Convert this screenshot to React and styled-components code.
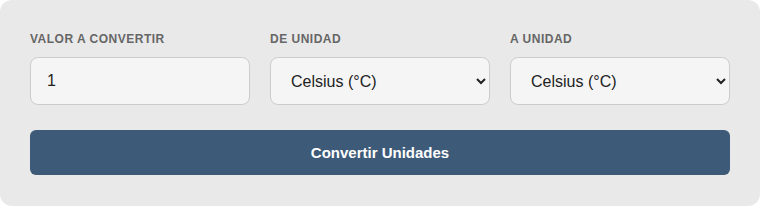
import styled, { createGlobalStyle } from "styled-components";
import { useState } from "react";

const Global = createGlobalStyle`
  html, body {
    margin: 0;
    padding: 0;
    background: #ffffff;
  }
  * {
    box-sizing: border-box;
  }
`;

const Card = styled.div`
  width: 760px;
  height: 206px;
  background: #e9e9e9;
  border-radius: 12px;
  padding: 30px;
  font-family: "Liberation Sans", Arial, sans-serif;
`;

const Fields = styled.div`
  display: grid;
  grid-template-columns: repeat(3, 220px);
  gap: 20px;
`;

const Field = styled.div`
  display: flex;
  flex-direction: column;
`;

const Label = styled.label`
  font-size: 12px;
  font-weight: 700;
  letter-spacing: 0.5px;
  text-transform: uppercase;
  color: #666666;
  line-height: 18px;
  margin-bottom: 9px;
`;

const controlCss = `
  height: 48px;
  width: 100%;
  border: 1px solid #cccccc;
  border-radius: 8px;
  background: #f5f5f5;
  font-family: "Liberation Sans", Arial, sans-serif;
  font-size: 16px;
  color: #222222;
  outline: none;
`;

const Input = styled.input`
  ${controlCss}
  padding: 0 16px;
`;

const Select = styled.select`
  ${controlCss}
  padding: 0 8px 0 16px;
`;

const Button = styled.button`
  display: block;
  width: 100%;
  height: 45px;
  margin-top: 25px;
  border: none;
  border-radius: 6px;
  background: #3d5a78;
  color: #ffffff;
  font-family: "Liberation Sans", Arial, sans-serif;
  font-size: 15px;
  font-weight: 700;
  cursor: pointer;
`;

const UNITS = ["Celsius (°C)", "Fahrenheit (°F)", "Kelvin (K)"];

const App = () => {
  const [value, setValue] = useState("1");
  const [from, setFrom] = useState(UNITS[0]);
  const [to, setTo] = useState(UNITS[0]);
  return (
    <>
      <Global />
      <Card>
        <Fields>
          <Field>
            <Label>Valor a convertir</Label>
            <Input value={value} onChange={(e) => setValue(e.target.value)} />
          </Field>
          <Field>
            <Label>De unidad</Label>
            <Select value={from} onChange={(e) => setFrom(e.target.value)}>
              {UNITS.map((u) => (
                <option key={u}>{u}</option>
              ))}
            </Select>
          </Field>
          <Field>
            <Label>A unidad</Label>
            <Select value={to} onChange={(e) => setTo(e.target.value)}>
              {UNITS.map((u) => (
                <option key={u}>{u}</option>
              ))}
            </Select>
          </Field>
        </Fields>
        <Button>Convertir Unidades</Button>
      </Card>
    </>
  );
};

export default App;
